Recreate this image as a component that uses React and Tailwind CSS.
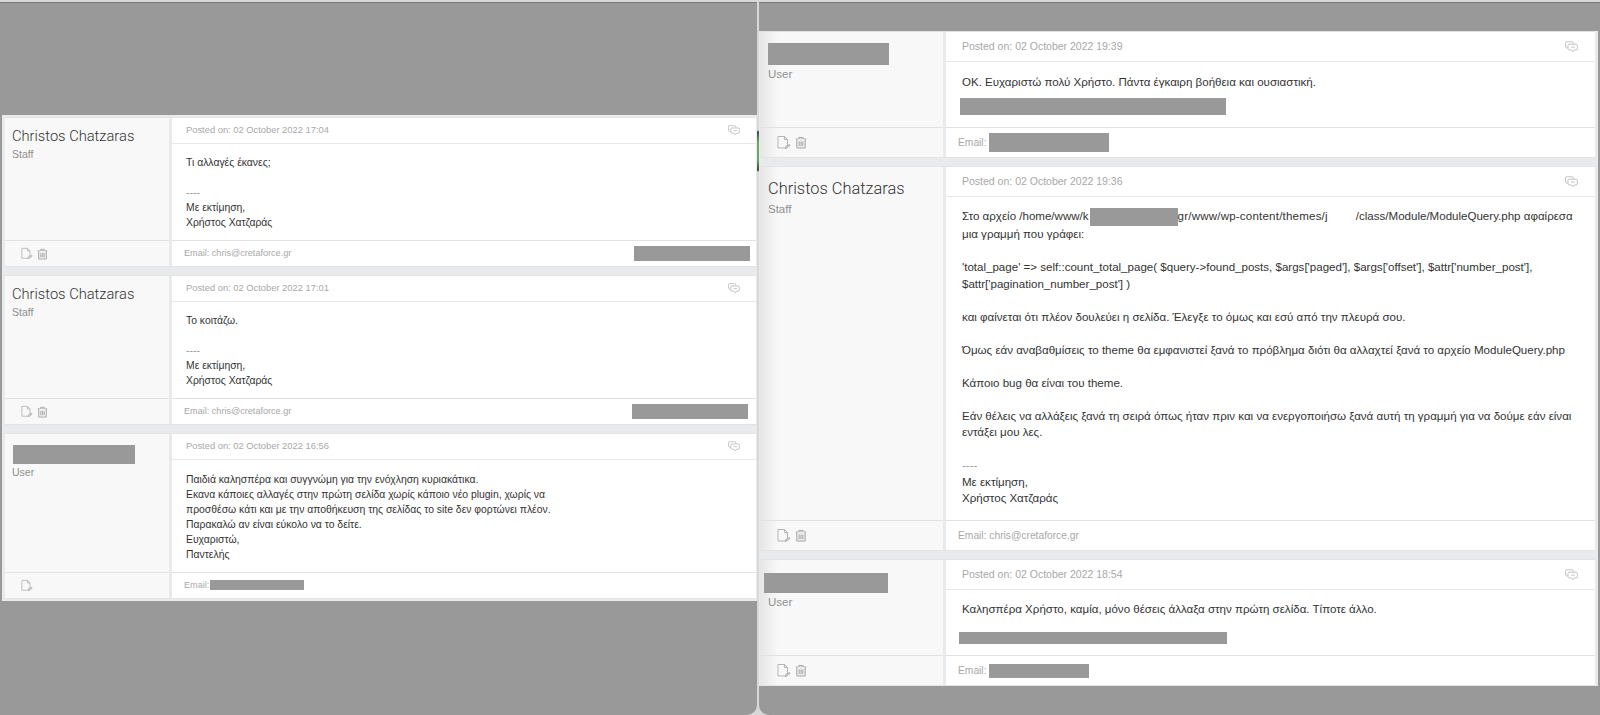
import React from 'react';

const DocIcon = ({ className }) => (
  <svg viewBox="0 0 14 15" fill="none" stroke="#b5b5b5" strokeWidth="1" className={className}>
    <path d="M1 1.5 h6.5 l3 3 v6 M1 1.5 v11.5 h7" />
    <path d="M7.5 1.5 v3 h3" />
    <path d="M8 13.5 l1 -2.5 l3.5 -1.5 l.5 1 l-3 2.5 z" fill="#d0d0d0" />
  </svg>
);

const TrashIcon = ({ className }) => (
  <svg viewBox="0 0 12 13" fill="none" stroke="#a8a8a8" strokeWidth="1" className={className}>
    <path d="M.8 3 h10.4 M4 3 v-1.6 h4 V3" />
    <path d="M1.8 3 v9 h8.4 V3" fill="#ececec" />
    <path d="M4.2 5.5 v4.5 M6 5.5 v4.5 M7.8 5.5 v4.5" />
  </svg>
);

const ChatIcon = ({ className }) => (
  <svg viewBox="0 0 14 13" fill="none" stroke="#bdbdbd" strokeWidth="1" className={className}>
    <path d="M3 7.5 H1.8 q-1.2 0 -1.2 -1.2 V2 q0 -1.2 1.2 -1.2 h6 q1.2 0 1.2 1.2 v1" />
    <path d="M4.5 3.5 h7.5 q1.3 0 1.3 1.3 v3.6 q0 1.3 -1.3 1.3 h-2 l-1.5 2 l-1.5 -2 h-2.5 q-1.3 0 -1.3 -1.3 V4.8 q0 -1.3 1.3 -1.3 z" fill="#fff" />
    <path d="M6.5 6.6 h4" />
  </svg>
);

const Bar = ({ className }) => <div className={`bg-[#999] ${className}`} />;

// left window is rendered smaller than the right one
const sizes = {
  left: {
    card: 'grid-cols-[164px_1fr] gap-x-[3px]',
    top: 'h-[26px] pl-[14px] pr-[16px] text-[9.35px]',
    name: 'text-[14.7px] leading-[20px] -mt-[1px]',
    role: 'text-[10.5px] leading-[14px] mt-[1px]',
    body: 'pl-[14px] pt-[11px] text-[10.4px] leading-[15px]',
    foot: 'h-[26px] pl-[12px] pr-[6px] text-[9.1px]',
    iconBox: 'pl-[16px] gap-[4px]',
    doc: 'w-[12px] h-[13px]',
    trash: 'w-[11px] h-[12px]',
    chat: 'w-[12px] h-[11px]',
    side: 'pl-[7px] pt-[9px] bg-[#f8f8f8]',
    sideFoot: 'bg-[#f8f8f8]',
  },
  right: {
    card: 'grid-cols-[183px_1fr] gap-x-[3px]',
    top: 'h-[30px] pl-[16px] pr-[17px] text-[10.5px]',
    name: 'text-[16.4px] leading-[22px]',
    role: 'text-[11.5px] leading-[15px] mt-[2px]',
    body: 'pl-[16px] pt-[11px] text-[11.55px] leading-[16.5px]',
    foot: 'h-[30px] pl-[12px] pr-[6px] text-[10.25px]',
    iconBox: 'pl-[17px] gap-[4px]',
    doc: 'w-[14px] h-[15px]',
    trash: 'w-[12px] h-[13px]',
    chat: 'w-[13px] h-[12px]',
    side: 'pl-[8px] pt-[11px] bg-[linear-gradient(to_right,#e6e6e6,#f8f8f8_18px)]',
    sideFoot: 'bg-[linear-gradient(to_right,#e6e6e6,#f8f8f8_18px)]',
  },
};

function Card({ size, name, role, posted, trash = true, email, footRight, sideCustom, bodyH, children }) {
  const s = sizes[size];
  return (
    <div className={`grid ${s.card} bg-[#e9eaeb] border-y border-[#e4e4e4]`}>
      <div className={`flex flex-col ${s.side}`} style={{ gridRow: 'span 2' }}>
        {sideCustom || <div className={`font-['Roboto',sans-serif] font-light text-[#333] ${s.name}`}>{name}</div>}
        <div className={`text-[#8f8f8f] ${s.role}`}>{role}</div>
      </div>
      <div className="bg-white flex flex-col" style={{ gridRow: 'span 2' }}>
        <div className={`flex items-center justify-between border-b border-[#e8e8e8] text-[#a8a8a8] ${s.top}`}>
          <span>Posted on: {posted}</span>
          <ChatIcon className={s.chat} />
        </div>
        <div className={`text-[#333] ${s.body}`} style={{ height: bodyH }}>{children}</div>
      </div>
      <div className={`${s.sideFoot} border-t border-[#e2e2e2] flex items-center ${s.iconBox}`}>
        <DocIcon className={s.doc} />
        {trash && <TrashIcon className={s.trash} />}
      </div>
      <div className={`bg-white border-t border-[#e2e2e2] flex items-center justify-between text-[#a8a8a8] ${s.foot}`}>
        <div className="flex items-center gap-[3px]">{email}</div>
        {footRight}
      </div>
    </div>
  );
}

const Signature = () => (
  <>
    <div className="text-[#999]">----</div>
    <div>Με εκτίμηση,</div>
    <div>Χρήστος Χατζαράς</div>
  </>
);

const Blank = () => <div className="h-[16.5px]" />;

export default function App() {
  return (
    <div className="w-[1600px] h-[715px] pt-[2px] flex overflow-hidden bg-[#d8d8d8] font-['Liberation_Sans',sans-serif]">
      {/* left window */}
      <div className="w-[757px] h-full flex flex-col bg-[#999] rounded-br-[10px] border-t border-[#7a7a7a] pl-[2px]">
        <div className="h-[112px] shrink-0" />
        <div className="bg-[#e9eaeb] pl-[3px] pr-[1px] pt-[2px] pb-[2px] flex flex-col gap-[8px]">
          <Card
            size="left"
            name="Christos Chatzaras"
            role="Staff"
            posted="02 October 2022 17:04"
            bodyH={96}
            email={<span>Email: chris@cretaforce.gr</span>}
            footRight={<Bar className="w-[116px] h-[15px]" />}
          >
            <div>Τι αλλαγές έκανες;</div>
            <div className="h-[15px]" />
            <Signature />
          </Card>
          <Card
            size="left"
            name="Christos Chatzaras"
            role="Staff"
            posted="02 October 2022 17:01"
            bodyH={96}
            email={<span>Email: chris@cretaforce.gr</span>}
            footRight={<Bar className="w-[116px] h-[15px] mr-[2px]" />}
          >
            <div>Το κοιτάζω.</div>
            <div className="h-[15px]" />
            <Signature />
          </Card>
          <Card
            size="left"
            role="User"
            posted="02 October 2022 16:56"
            trash={false}
            bodyH={112}
            sideCustom={<Bar className="w-[122px] h-[19px] mt-[2px] ml-[1px]" />}
            email={<><span>Email:</span><Bar className="w-[94px] h-[10px] -ml-[2px]" /></>}
          >
            <div className="mt-[1px]">Παιδιά καλησπέρα και συγγνώμη για την ενόχληση κυριακάτικα.</div>
            <div>Εκανα κάποιες αλλαγές στην πρώτη σελίδα χωρίς κάποιο νέο plugin, χωρίς να</div>
            <div>προσθέσω κάτι και με την αποθήκευση της σελίδας το site δεν φορτώνει πλέον.</div>
            <div>Παρακαλώ αν είναι εύκολο να το δείτε.</div>
            <div>Ευχαριστώ,</div>
            <div>Παντελής</div>
          </Card>
        </div>
      </div>

      {/* strip showing what is behind the windows */}
      <div className="w-[2px] h-full bg-[linear-gradient(to_bottom,#d8d8d8_0,#d8d8d8_128px,#444_130px,#6aa86a_140px,#6aa86a_158px,#444_168px,#d8d8d8_170px)]" />

      {/* right window */}
      <div className="flex-1 h-full flex flex-col bg-[#999] rounded-bl-[10px] border-t border-[#7a7a7a] pr-[2px]">
        <div className="h-[28px] shrink-0" />
        <div className="bg-[#e9eaeb] pl-[1px] pr-[3px] flex flex-col gap-[8px]">
          <Card
            size="right"
            role="User"
            posted="02 October 2022 19:39"
            bodyH={65}
            sideCustom={<Bar className="w-[121px] h-[22px]" />}
            email={<><span>Email:</span><Bar className="w-[120px] h-[19px]" /></>}
          >
            <div className="mt-[1px]">ΟΚ. Ευχαριστώ πολύ Χρήστο. Πάντα έγκαιρη βοήθεια και ουσιαστική.</div>
            <Bar className="w-[266px] h-[17px] mt-[7px] -ml-[2px]" />
          </Card>
          <Card
            size="right"
            name="Christos Chatzaras"
            role="Staff"
            posted="02 October 2022 19:36"
            bodyH={323}
            email={<span>Email: chris@cretaforce.gr</span>}
          >
            <div>
              Στο αρχείο /home/www/k<span className="inline-block align-middle bg-[#999] w-[88px] h-[18px] ml-[1px]" /><span className="tracking-[0.2px]">gr/www/wp-content/themes/j</span>
              <span className="inline-block w-[28px]" />/class/Module/ModuleQuery.php αφαίρεσα
            </div>
            <div>μια γραμμή που γράφει:</div>
            <Blank />
            <div>'total_page' =&gt; self::count_total_page( $query-&gt;found_posts, $args['paged'], $args['offset'], $attr['number_post'],</div>
            <div>$attr['pagination_number_post'] )</div>
            <Blank />
            <div>και φαίνεται ότι πλέον δουλεύει η σελίδα. Έλεγξε το όμως και εσύ από την πλευρά σου.</div>
            <Blank />
            <div>Όμως εάν αναβαθμίσεις το theme θα εμφανιστεί ξανά το πρόβλημα διότι θα αλλαχτεί ξανά το αρχείο ModuleQuery.php</div>
            <Blank />
            <div>Κάποιο bug θα είναι του theme.</div>
            <Blank />
            <div>Εάν θέλεις να αλλάξεις ξανά τη σειρά όπως ήταν πριν και να ενεργοποιήσω ξανά αυτή τη γραμμή για να δούμε εάν είναι</div>
            <div>εντάξει μου λες.</div>
            <Blank />
            <Signature />
          </Card>
          <Card
            size="right"
            role="User"
            posted="02 October 2022 18:54"
            bodyH={65}
            sideCustom={<Bar className="w-[124px] h-[20px] -ml-[4px] mt-[2px]" />}
            email={<><span>Email:</span><Bar className="w-[100px] h-[14px]" /></>}
          >
            <div>Καλησπέρα Χρήστο, καμία, μόνο θέσεις άλλαξα στην πρώτη σελίδα. Τίποτε άλλο.</div>
            <Bar className="w-[268px] h-[12px] mt-[14px] -ml-[3px]" />
          </Card>
        </div>
      </div>
    </div>
  );
}
